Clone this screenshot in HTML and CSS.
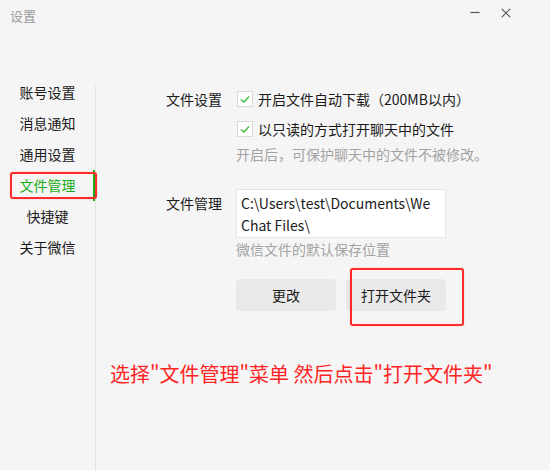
FILE: index.html
```html
<!DOCTYPE html>
<html lang="zh-CN">
<head>
    <meta charset="UTF-8">
    <title>设置</title>
    <link rel="stylesheet" href="styles.css">
</head>
<body>
    <div class="window">
        <div class="titlebar">
            <span class="title">设置</span>
            <div class="controls">
                <svg class="ctl" width="10" height="10" viewBox="0 0 10 10"><line x1="0.5" y1="4.5" x2="9.5" y2="4.5" stroke="#555" stroke-width="1.2"/></svg>
                <svg class="ctl" width="10" height="10" viewBox="0 0 10 10"><path d="M0.8 0.8 L9.2 9.2 M9.2 0.8 L0.8 9.2" stroke="#555" stroke-width="1.2" fill="none"/></svg>
            </div>
        </div>

        <div class="main">
            <ul class="nav">
                <li>账号设置</li>
                <li>消息通知</li>
                <li>通用设置</li>
                <li class="active">文件管理</li>
                <li>快捷键</li>
                <li>关于微信</li>
            </ul>
            <div class="divider"></div>

            <div class="content">
                <div class="settings">
                    <div class="row">
                        <div class="label">文件设置</div>
                        <div class="field">
                            <div class="check-line">
                                <span class="checkbox"><svg width="14" height="14" viewBox="0 0 14 14"><polyline points="3,7.5 6,10 11,4.5" fill="none" stroke="#3dbb3d" stroke-width="1.3"/></svg></span>
                                <span>开启文件自动下载（200MB以内）</span>
                            </div>
                            <div class="check-line">
                                <span class="checkbox"><svg width="14" height="14" viewBox="0 0 14 14"><polyline points="3,7.5 6,10 11,4.5" fill="none" stroke="#3dbb3d" stroke-width="1.3"/></svg></span>
                                <span>以只读的方式打开聊天中的文件</span>
                            </div>
                            <div class="hint">开启后，可保护聊天中的文件不被修改。</div>
                        </div>
                    </div>

                    <div class="row row-path">
                        <div class="label label-path">文件管理</div>
                        <div class="field">
                            <div class="path-box">C:\Users\test\Documents\We<br>Chat Files\</div>
                            <div class="hint">微信文件的默认保存位置</div>
                            <div class="buttons">
                                <button class="btn">更改</button>
                                <button class="btn">打开文件夹</button>
                            </div>
                        </div>
                    </div>
                </div>

                <p class="tip">选择"文件管理"菜单 然后点击"打开文件夹"</p>
            </div>
        </div>

        <div class="mark mark-nav"></div>
        <div class="mark mark-btn"></div>
    </div>
</body>
</html>
```

FILE: styles.css
```css
body {
    margin: 0;
    font-family: "Noto Sans CJK SC", "Noto Sans", sans-serif;
    color: #1a1a1a;
    background: #f5f5f5;
}
.window {
    position: relative;
    width: 550px;
    height: 470px;
    display: flex;
    flex-direction: column;
    background: #f5f5f5;
    overflow: hidden;
}
.titlebar {
    height: 32px;
    display: flex;
    justify-content: space-between;
    align-items: flex-start;
    padding: 0 39px 0 10px;
}
.title {
    font-size: 13px;
    line-height: 32px;
    color: #9a9a9a;
}
.controls {
    display: flex;
    gap: 21px;
    margin-top: 8px;
}
.ctl {
    display: block;
}
.main {
    flex: 1;
    display: flex;
    margin-top: 45px;
}
.nav {
    width: 95px;
    margin: 0;
    padding: 0;
    list-style: none;
}
.nav li {
    height: 31px;
    line-height: 31px;
    text-align: center;
    font-size: 14px;
    color: #1a1a1a;
}
.nav li.active {
    color: #1aad19;
    box-shadow: inset -2px 0 0 #1aad19;
}
.divider {
    width: 1px;
    margin-top: 9px;
    background: #e2e2e2;
}
.content {
    flex: 1;
    padding: 10px 0 0 14px;
}
.settings {
    padding-left: 56px;
}
.row {
    display: flex;
    font-size: 14px;
}
.row-path {
    margin-top: 24px;
}
.label {
    width: 70px;
    line-height: 24px;
}
.label-path {
    line-height: 22px;
    padding-top: 3px;
}
.check-line {
    display: flex;
    align-items: center;
    gap: 5px;
    height: 24px;
    margin-left: 1px;
}
.check-line + .check-line {
    margin-top: 6px;
}
.checkbox {
    width: 14px;
    height: 14px;
    border: 1px solid #d9d9d9;
    background: #fff;
    display: flex;
}
.hint {
    line-height: 22px;
    margin-top: 2px;
    color: #a3a3a3;
}
.path-box {
    width: 210px;
    box-sizing: border-box;
    padding: 2px 4px 1px;
    border: 1px solid #e6e6e6;
    background: #fff;
    line-height: 22px;
}
.path-box + .hint {
    margin-top: 0;
}
.buttons {
    display: flex;
    gap: 10px;
    margin-top: 19px;
}
.btn {
    width: 100px;
    height: 32px;
    border: none;
    border-radius: 4px;
    background: #e9e9e9;
    font-family: inherit;
    font-size: 14px;
    color: #1a1a1a;
    padding: 0;
}
.tip {
    margin: 49px 0 0;
    font-size: 20px;
    line-height: 28px;
    color: #ff2424;
}
.mark {
    position: absolute;
    box-sizing: border-box;
    border: 2px solid #ff2a2a;
    border-radius: 3px;
    box-shadow: 0 0 1px rgba(255, 0, 0, 0.6);
}
.mark-nav {
    left: 10px;
    top: 172px;
    width: 87px;
    height: 27px;
}
.mark-btn {
    left: 350px;
    top: 268px;
    width: 114px;
    height: 58px;
}
```
